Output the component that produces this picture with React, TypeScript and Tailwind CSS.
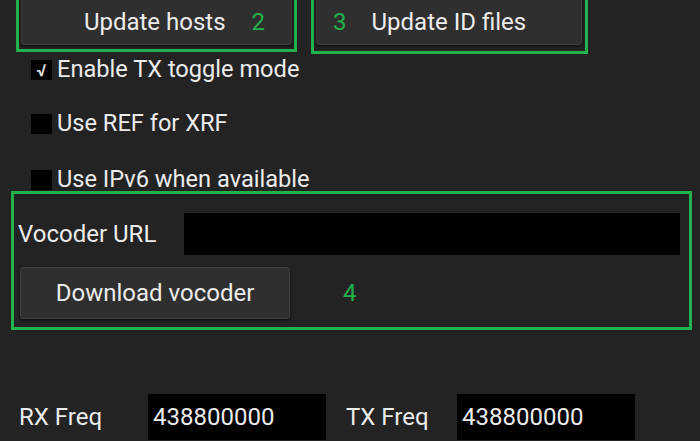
const green = "border-[3px] border-[#21b24b]";

const AppButton = ({ label, className }: { label: React.ReactNode; className: string }) => (
  <div
    className={`flex items-center rounded-[3px] border border-[#3f3f3f] bg-[#2f2f2f] text-[#ececec] shadow-[0_1px_3px_rgba(0,0,0,0.7)] ${className}`}
  >
    {label}
  </div>
);

const CheckRow = ({ label, checked }: { label: string; checked?: boolean }) => (
  <div className="flex h-[20px] items-center">
    <div className="flex h-[20px] w-[21px] items-center justify-center bg-black text-[17px] font-bold leading-none text-[#e0e0e0]">
      {checked ? "√" : ""}
    </div>
    <span className="ml-[5px] text-[23.6px] leading-none text-[#ececec]">{label}</span>
  </div>
);

const App = () => {
  return (
    <div className="h-[441px] w-[700px] overflow-hidden bg-[#232323] font-['Roboto',sans-serif]">
      {/* Top buttons */}
      <div className="-mt-[8px] flex items-start pl-[16px]">
        <div className={`${green} h-[60px] w-[281px] px-[2px]`}>
          <AppButton
            className="h-[50px] w-full justify-center pt-[4px] text-[24px]"
            label={
              <>
                <span className="ml-[36px]">Update hosts</span>
                <span className="ml-[26px] text-[#21b24b]">2</span>
              </>
            }
          />
        </div>
        <div className={`${green} ml-[14px] h-[62px] w-[277px] px-[2px]`}>
          <AppButton
            className="h-[50px] w-[266px] pl-[16px] pt-[4px] text-[24px]"
            label={
              <>
                <span className="text-[#21b24b]">3</span>
                <span className="ml-[25px]">Update ID files</span>
              </>
            }
          />
        </div>
      </div>

      {/* Checkboxes */}
      <div className="ml-[31px] mt-[6px] flex flex-col gap-[34px]">
        <CheckRow label="Enable TX toggle mode" checked />
        <CheckRow label="Use REF for XRF" />
        <div className="mt-[2px]">
          <CheckRow label="Use IPv6 when available" />
        </div>
      </div>

      {/* Vocoder */}
      <div className={`${green} ml-[11px] mt-[1px] h-[139px] w-[681px] pl-[4px] pt-[19px]`}>
        <div className="flex items-center">
          <span className="w-[166px] text-[24px] text-[#ececec]">Vocoder URL</span>
          <div className="h-[42px] w-[496px] bg-black" />
        </div>
        <div className="mt-[12px] flex items-center">
          <AppButton className="ml-[2px] h-[52px] w-[270px] justify-center text-[24px]" label="Download vocoder" />
          <span className="ml-[53px] text-[24px] text-[#21b24b]">4</span>
        </div>
      </div>

      {/* Frequencies */}
      <div className="ml-[19px] mt-[64px] flex items-center text-[24px] text-[#ececec]">
        <span className="w-[129px]">RX Freq</span>
        <div className="flex h-[46px] w-[178px] items-center bg-black pl-[5px]">438800000</div>
        <span className="ml-[20px] w-[111px]">TX Freq</span>
        <div className="flex h-[46px] w-[178px] items-center bg-black pl-[5px]">438800000</div>
      </div>
    </div>
  );
};

export default App;
